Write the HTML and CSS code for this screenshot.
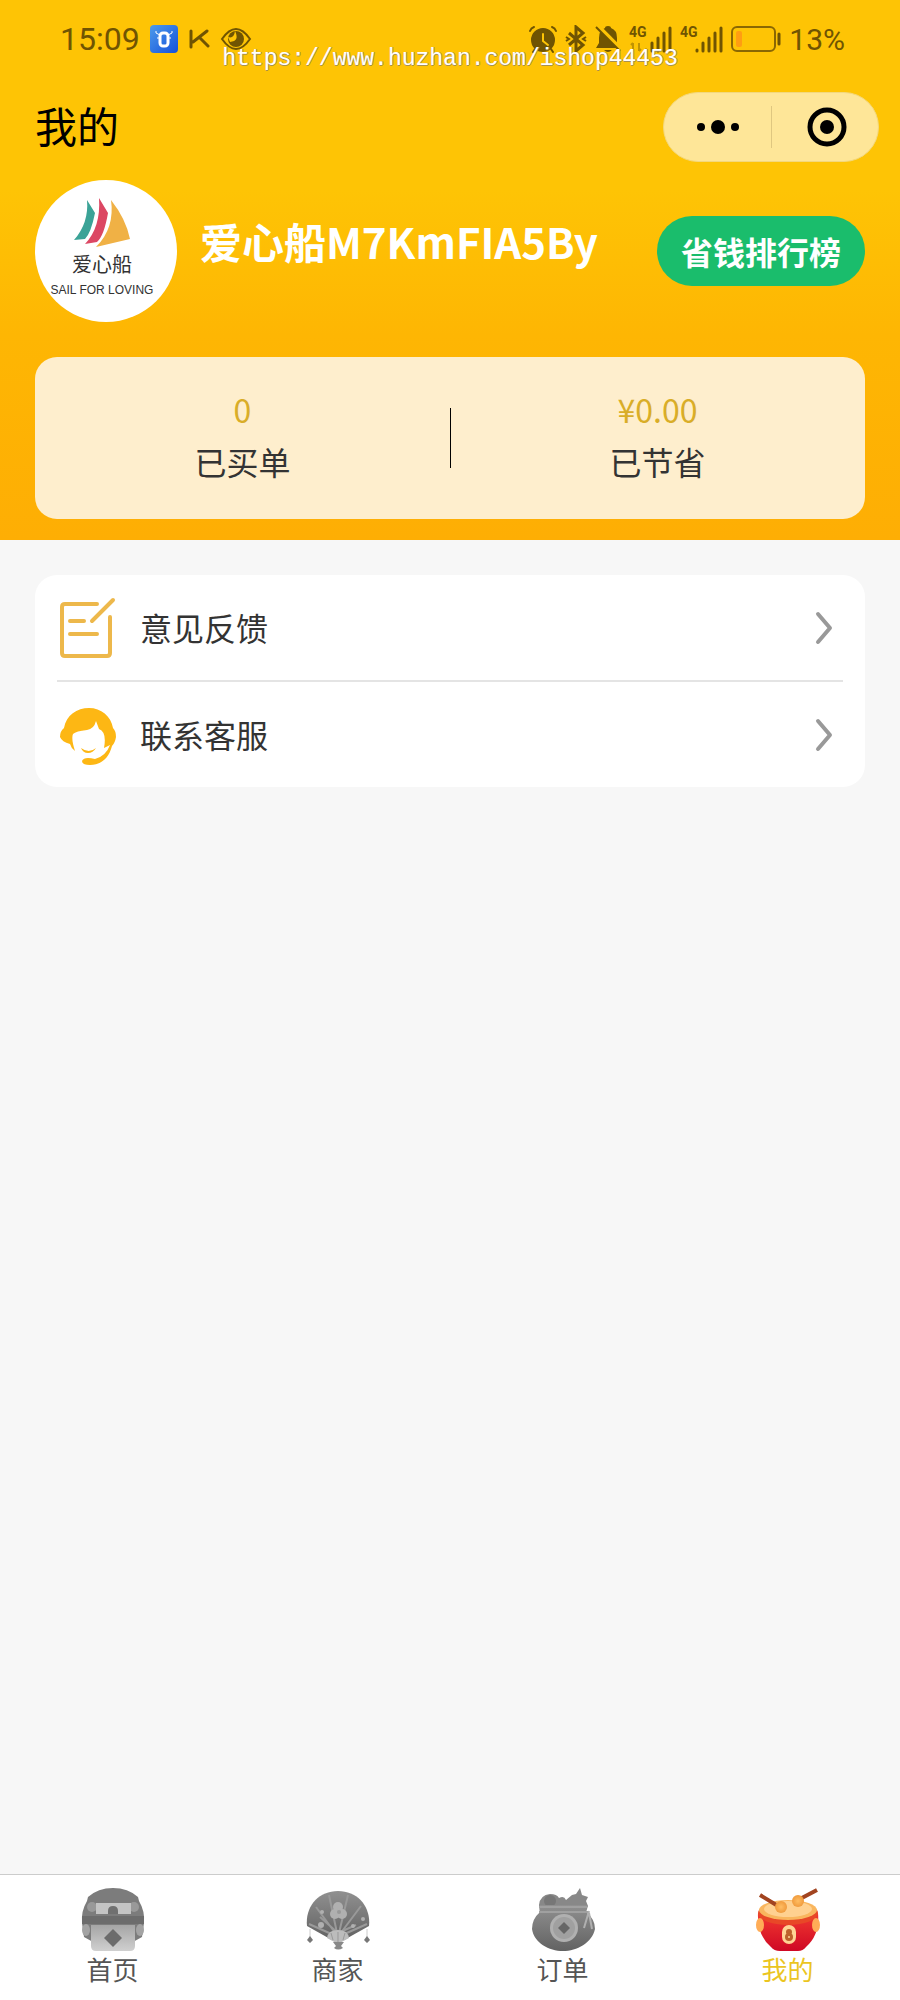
FILE: index.html
```
<!DOCTYPE html>
<html lang="zh-CN">
<head>
    <meta charset="UTF-8">
    <meta name="viewport" content="width=device-width, initial-scale=1.0">
    <title>我的</title>
    <link rel="stylesheet" href="styles.css">
</head>
<body>
    <div class="page">
        <header class="header">
            <div class="status-bar">
                <div class="status-group">
                    <span class="clock">15:09</span>
                    <svg class="app-badge" width="28" height="28" viewBox="0 0 28 28">
                        <defs>
                            <linearGradient id="badge" x1="0" y1="0" x2="1" y2="1">
                                <stop offset="0" stop-color="#4d9bea"/>
                                <stop offset="1" stop-color="#1450dc"/>
                            </linearGradient>
                        </defs>
                        <rect width="28" height="28" rx="4" fill="url(#badge)"/>
                        <path d="M6 6v2l4 2M22 6v2l-4 2M7 13h3M21 13h-3" fill="none" stroke="#fff" stroke-width="1"/>
                        <rect x="10" y="8" width="8" height="13" rx="3" fill="none" stroke="#fff" stroke-width="3"/>
                    </svg>
                    <svg width="22" height="22" viewBox="0 0 22 22" fill="none" stroke="#705402" stroke-width="3" stroke-linecap="round">
                        <path d="M3 3v16M19 3L5 14M12 10l8 8"/>
                    </svg>
                    <svg width="32" height="24" viewBox="0 0 32 24">
                        <path d="M2 12Q16-8 30 12Q16 32 2 12z" fill="none" stroke="#705402" stroke-width="2"/>
                        <circle cx="16" cy="12" r="8" fill="#705402"/>
                        <path d="M8 10q6 2 7-6 5 10-5 11z" fill="#fec405"/>
                    </svg>
                </div>
                <div class="status-group icons-right">
                    <svg width="28" height="28" viewBox="0 0 28 28" fill="none" stroke="#705402" stroke-linecap="round">
                        <circle cx="14" cy="15" r="11" fill="#705402" stroke-width="2"/>
                        <path d="M1 6q1-3 4-4M27 6q-1-3-4-4M6 24l-2 3M22 24l2 3" stroke-width="2"/>
                        <path d="M14 9v7l5 4" stroke="#fec405" stroke-width="2"/>
                    </svg>
                    <svg width="22" height="28" viewBox="0 0 22 28" fill="none" stroke="#705402" stroke-width="3">
                        <path d="M4 8l14 12-7 6V2l7 6L4 20"/>
                        <path d="M1 12l3 2-3 2M21 12l-3 2 3 2" stroke-width="2"/>
                    </svg>
                    <svg width="26" height="28" viewBox="0 0 26 28">
                        <path d="M13 1q-3 0-3 2-6 2-6 10v5l-3 5h24l-3-5v-5q0-8-6-10 0-2-3-2zM9 25h8q-4 4-8 0z" fill="#705402"/>
                        <path d="M3 1l24 24" stroke="#fec405" stroke-width="4"/>
                        <path d="M1 2l24 24" stroke="#705402" stroke-width="2"/>
                    </svg>
                    <svg width="43" height="28" viewBox="0 0 43 28">
                        <text class="network" x="0" y="12">4G</text>
                        <path d="M4 18v8M2 20l2-2M10 18v8M12 24l-2 2" stroke="#c09303" stroke-width="2" fill="none"/>
                        <path d="M17 25v1M23 18v8M29 13v13M35 8v18M41 3v23" stroke="#705402" stroke-width="3" stroke-linecap="round"/>
                    </svg>
                    <svg width="43" height="28" viewBox="0 0 43 28">
                        <text class="network" x="0" y="12">4G</text>
                        <path d="M17 25v1M23 18v8M29 13v13M35 8v18M41 3v23" stroke="#705402" stroke-width="3" stroke-linecap="round"/>
                    </svg>
                    <svg width="50" height="28" viewBox="0 0 50 28">
                        <rect x="1" y="2" width="43" height="24" rx="5" fill="none" stroke="#8a6703" stroke-width="2"/>
                        <rect x="5" y="6" width="6" height="16" rx="2" fill="#ff9d12"/>
                        <path d="M48 9v10" stroke="#705402" stroke-width="3" stroke-linecap="round"/>
                    </svg>
                    <span class="battery-text">13%</span>
                </div>
                <span class="watermark">https://www.huzhan.com/ishop44453</span>
            </div>

            <div class="nav-bar">
                <h1 class="nav-title">我的</h1>
                <div class="capsule">
                    <button class="capsule-btn" type="button" aria-label="更多">
                        <svg width="42" height="14" viewBox="0 0 42 14">
                            <circle cx="4" cy="7" r="4"/>
                            <circle cx="21" cy="7" r="7"/>
                            <circle cx="38" cy="7" r="4"/>
                        </svg>
                    </button>
                    <button class="capsule-btn" type="button" aria-label="关闭">
                        <svg width="40" height="40" viewBox="0 0 40 40">
                            <circle cx="20" cy="20" r="17" fill="none" stroke="#000" stroke-width="5"/>
                            <circle cx="20" cy="20" r="7"/>
                        </svg>
                    </button>
                </div>
            </div>

            <div class="profile">
                <div class="avatar">
                    <svg width="58" height="52" viewBox="0 0 58 52">
                        <path d="M14 3l8 13Q18 36 12 42L1 43Q16 26 14 3z" fill="#3ba397"/>
                        <path d="M26 1l9 15Q31 39 24 45l-12 2Q28 30 26 1z" fill="#dc4763"/>
                        <path d="M38 3Q53 22 57 42L23 50Q42 31 38 3z" fill="#f0b145"/>
                    </svg>
                    <span class="avatar-name">爱心船</span>
                    <span class="avatar-slogan">SAIL FOR LOVING</span>
                </div>
                <div class="user-name">爱心船M7KmFIA5By</div>
                <button class="rank-btn" type="button">省钱排行榜</button>
            </div>

            <div class="stats">
                <div class="stat">
                    <span class="stat-value">0</span>
                    <span class="stat-label">已买单</span>
                </div>
                <div class="stat">
                    <span class="stat-value">¥0.00</span>
                    <span class="stat-label">已节省</span>
                </div>
            </div>
        </header>

        <main class="content">
            <nav class="menu">
                <a class="menu-item" href="#feedback">
                    <svg width="60" height="62" viewBox="0 0 60 62" fill="none" stroke="#edb84b" stroke-width="4" stroke-linecap="round" stroke-linejoin="round">
                        <path d="M40 7H8q-3 0-3 3v46q0 3 3 3h42q3 0 3-3V20M35 24L56 3M13 24h14M13 37h27"/>
                    </svg>
                    <span class="menu-text">意见反馈</span>
                    <svg class="arrow" width="18" height="34" viewBox="0 0 18 34">
                        <path d="M3 3l12 14L3 31"/>
                    </svg>
                </a>
                <a class="menu-item" href="#service">
                    <svg width="60" height="62" viewBox="0 0 60 62">
                        <path d="M7 24C9 11 20 4 32 4s22 8 24 20q3 3 3 9-1 6-4 9C52 54 44 61 33 61q-8 0-8-4 2-5 13-2 11-3 15-14L47 44Q50 28 42 25L39 17Q37 25 30 26q-11 1-14 4-2 5 2 17-4-3-5-7-8-2-10-7 0-6 4-9z" fill="#fdb714"/>
                        <path d="M24 44q8 6 15 0-3 5-8 5t-7-5z" fill="#fdb714"/>
                    </svg>
                    <span class="menu-text">联系客服</span>
                    <svg class="arrow" width="18" height="34" viewBox="0 0 18 34">
                        <path d="M3 3l12 14L3 31"/>
                    </svg>
                </a>
            </nav>
        </main>

        <nav class="tab-bar">
            <a class="tab" href="#home">
                <svg width="64" height="64" viewBox="0 0 64 64">
                    <defs>
                        <linearGradient id="grey" x1="0" y1="0" x2="0" y2="1">
                            <stop offset="0" stop-color="#909090"/>
                            <stop offset="1" stop-color="#626262"/>
                        </linearGradient>
                        <linearGradient id="silver" x1="0" y1="0" x2="0" y2="1">
                            <stop offset="0" stop-color="#a5a5a5"/>
                            <stop offset="1" stop-color="#d0d0d0"/>
                        </linearGradient>
                    </defs>
                    <path d="M7 10Q17 1 32 1t25 9l1 4q6 10 5 22l-2 14-9 5H12l-9-5L1 36Q0 24 6 14z" fill="#7c7c7c"/>
                    <path d="M1 29h62v8H1z" fill="#6c6c6c"/>
                    <circle cx="11" cy="20" r="5" fill="#999"/>
                    <circle cx="53" cy="20" r="5" fill="#999"/>
                    <ellipse cx="5" cy="43" rx="4" ry="6" fill="#a3a3a3"/>
                    <ellipse cx="59" cy="43" rx="4" ry="6" fill="#a3a3a3"/>
                    <path d="M15 16h35v11H15z" fill="#c4c4c4"/>
                    <path d="M27 27v-3q0-5 5-5t5 5v3z" fill="#707070"/>
                    <path d="M10 38h44v21q0 5-5 5H15q-5 0-5-5z" fill="url(#silver)"/>
                    <path d="M32 42l9 9-9 9-9-9z" fill="#6c6c6c"/>
                </svg>
                <span>首页</span>
            </a>
            <a class="tab" href="#shops">
                <svg width="64" height="64" viewBox="0 0 64 64">
                    <path d="M1 39C-1 20 12 4 32 4s33 16 31 35L38 53H26z" fill="url(#grey)"/>
                    <path d="M30 49L3 37M30 47L10 20M31 46L23 8M33 46L42 8M34 47L55 19M34 49L61 37M32 46L14 30M32 46l18-8" stroke="#999" stroke-width="2"/>
                    <g fill="#b0b0b0">
                        <circle cx="32" cy="20" r="5"/>
                        <circle cx="29" cy="27" r="5"/>
                        <circle cx="36" cy="27" r="5"/>
                        <circle cx="15" cy="38" r="3"/>
                        <circle cx="47" cy="39" r="2"/>
                        <circle cx="57" cy="32" r="2"/>
                        <circle cx="16" cy="25" r="2"/>
                    </g>
                    <circle cx="33" cy="25" r="2" fill="#999"/>
                    <path d="M21 51Q22 43 32 43t11 8l-11 6z" fill="#bcbcbc"/>
                    <path d="M32 55V45M27 53l-2-7M37 53l2-7" stroke="#999"/>
                    <path d="M27 55h11l-3 4 2 2q-5 3-9 0l2-2z" fill="#888"/>
                    <path d="M4 42v8M61 42v8" stroke="#ccc"/>
                    <path d="M4 49l3 4-3 3-3-3zM61 49l3 4-3 3-3-3z" fill="#777"/>
                </svg>
                <span>商家</span>
            </a>
            <a class="tab" href="#orders">
                <svg width="64" height="64" viewBox="0 0 64 64">
                    <path d="M8 18Q9 8 19 7q7 0 9 4 5-3 7 2l6-5 4-1 4-6 2 7 6 2-2 4 2 5-3 9H9z" fill="#888"/>
                    <circle cx="19" cy="14" r="6" fill="#777"/>
                    <path d="M9 18h47l-1 7q9 7 9 17C61 56 46 64 32 64S3 56 1 42q0-10 8-17z" fill="url(#grey)"/>
                    <path d="M8 20h48M8 25h49" stroke="#a0a0a0" stroke-width="2"/>
                    <circle cx="33" cy="41" r="14" fill="#b0b0b0"/>
                    <circle cx="33" cy="41" r="11" fill="#a0a0a0"/>
                    <path d="M33 35l6 6-6 6-6-6z" fill="#666"/>
                    <path d="M58 24l-5 17M58 26l3 16" stroke="#b0b0b0" stroke-width="2"/>
                </svg>
                <span>订单</span>
            </a>
            <a class="tab active" href="#mine" aria-current="page">
                <svg width="64" height="64" viewBox="0 0 64 64">
                    <defs>
                        <linearGradient id="drum" x1="0" y1="0" x2="0" y2="1">
                            <stop offset="0" stop-color="#f23a30"/>
                            <stop offset="1" stop-color="#cf0825"/>
                        </linearGradient>
                        <radialGradient id="ball">
                            <stop offset="0" stop-color="#ffbd62"/>
                            <stop offset="1" stop-color="#f09b3d"/>
                        </radialGradient>
                    </defs>
                    <path d="M2 26h60Q64 48 50 60q-3 4-8 4H24q-6 0-9-4Q1 48 2 26z" fill="url(#drum)"/>
                    <ellipse cx="32" cy="26" rx="30" ry="12" fill="#e84827"/>
                    <ellipse cx="32" cy="23" rx="29" ry="10" fill="#f9b65e"/>
                    <ellipse cx="32" cy="22" rx="24" ry="8" fill="#ffd190"/>
                    <path d="M4 8l18 11M61 3L42 13" stroke="#a24420" stroke-width="4"/>
                    <circle cx="25" cy="20" r="6" fill="url(#ball)"/>
                    <circle cx="42" cy="14" r="6" fill="url(#ball)"/>
                    <ellipse cx="4" cy="38" rx="4" ry="7" fill="#ffad57"/>
                    <ellipse cx="60" cy="38" rx="4" ry="7" fill="#ffad57"/>
                    <rect x="26" y="38" width="14" height="19" rx="7" fill="#ffd495"/>
                    <circle cx="33" cy="45" r="3" fill="#bd622b"/>
                    <circle cx="33" cy="50" r="4" fill="#bd622b"/>
                    <circle cx="33" cy="50" r="1" fill="#ffd495"/>
                </svg>
                <span>我的</span>
            </a>
        </nav>
    </div>
</body>
</html>
```
FILE: styles.css
```
* {
    box-sizing: border-box;
}
body {
    margin: 0;
    background: #f7f7f7;
    color: #333;
    font-family: "Noto Sans CJK SC", sans-serif;
}
svg {
    display: block;
    flex-shrink: 0;
}
button {
    border: none;
    padding: 0;
    font-family: inherit;
    cursor: pointer;
}
a {
    color: inherit;
    text-decoration: none;
}
.page {
    display: flex;
    flex-direction: column;
    min-height: 100vh;
}

/* header */
.header {
    padding: 0 35px 21px;
    background: linear-gradient(#fec405 0%, #fec405 35%, #feb603 62%, #feae04 100%);
}
.status-bar {
    position: relative;
    display: flex;
    align-items: center;
    justify-content: space-between;
    height: 78px;
    padding: 0 20px 0 25px;
    color: #705402;
    font-family: Roboto, sans-serif;
    font-size: 32px;
}
.status-group {
    display: flex;
    align-items: center;
    gap: 10px;
}
.icons-right {
    gap: 8px;
}
.battery-text {
    font-size: 30px;
}
.network {
    fill: #705402;
    font-family: Roboto, sans-serif;
    font-size: 14px;
    font-weight: bold;
}
.watermark {
    position: absolute;
    top: 46px;
    left: 0;
    right: 0;
    color: #fff;
    font-family: "Liberation Mono", monospace;
    font-size: 23px;
    line-height: 26px;
    text-align: center;
    text-shadow: 1px 0 #a89050, 0 1px #a89050;
}
.nav-bar {
    display: flex;
    align-items: center;
    justify-content: space-between;
    margin: 14px -14px 0 0;
}
.nav-title {
    margin: 0;
    padding-bottom: 4px;
    color: #000;
    font-size: 42px;
    font-weight: normal;
    line-height: 60px;
}
.capsule {
    display: flex;
    width: 216px;
    height: 70px;
    border: 1px solid #f3d87e;
    border-radius: 35px;
    background: #fee698;
}
.capsule-btn {
    display: flex;
    flex: 1;
    align-items: center;
    justify-content: center;
    background: none;
}
.capsule-btn + .capsule-btn::before {
    content: "";
    width: 1px;
    height: 42px;
    margin-right: 35px;
    background: #dfc780;
}
.capsule-btn + .capsule-btn {
    justify-content: flex-start;
}

/* profile */
.profile {
    display: flex;
    align-items: center;
    margin-top: 18px;
}
.avatar {
    display: flex;
    flex-direction: column;
    align-items: center;
    width: 142px;
    height: 142px;
    padding: 17px 8px 0 0;
    border-radius: 50%;
    background: #fff;
}
.avatar-name {
    font-size: 20px;
    line-height: 30px;
}
.avatar-slogan {
    font-family: "Liberation Sans", sans-serif;
    font-size: 12px;
    line-height: 22px;
    white-space: nowrap;
}
.user-name {
    flex: 1;
    padding: 0 0 20px 23px;
    color: #fff;
    font-size: 42px;
    font-weight: bold;
    line-height: 60px;
}
.rank-btn {
    width: 208px;
    height: 70px;
    border-radius: 35px;
    background: #1abd6c;
    color: #fff;
    font-size: 32px;
    font-weight: bold;
}

/* stats */
.stats {
    display: flex;
    align-items: center;
    height: 162px;
    margin-top: 35px;
    border-radius: 22px;
    background: #feeecd;
}
.stat {
    display: flex;
    flex: 1;
    flex-direction: column;
    align-items: center;
    padding-bottom: 6px;
    font-size: 32px;
    line-height: 52px;
}
.stat + .stat {
    position: relative;
}
.stat + .stat::before {
    content: "";
    position: absolute;
    top: 25px;
    left: 0;
    width: 1px;
    height: 60px;
    background: #000;
}
.stat-value {
    color: #d9ad28;
}

/* menu */
.content {
    flex: 1;
    padding: 35px;
}
.menu {
    padding: 0 22px;
    border-radius: 22px;
    background: #fff;
}
.menu-item {
    display: flex;
    align-items: center;
    height: 105px;
}
.menu-item + .menu-item {
    height: 107px;
    border-top: 2px solid #e4e4e4;
}
.menu-text {
    flex: 1;
    padding: 0 0 2px 23px;
    font-size: 32px;
    line-height: 48px;
}
.arrow {
    margin-right: 10px;
    fill: none;
    stroke: #999;
    stroke-width: 4px;
    stroke-linecap: round;
    stroke-linejoin: round;
}

/* tab bar */
.tab-bar {
    display: flex;
    height: 126px;
    padding-top: 12px;
    border-top: 1px solid #ccc;
    background: #fff;
}
.tab {
    display: flex;
    flex: 1;
    flex-direction: column;
    align-items: center;
    color: #555;
    font-size: 26px;
    line-height: 36px;
}
.tab.active {
    color: #ebc51f;
}
```
